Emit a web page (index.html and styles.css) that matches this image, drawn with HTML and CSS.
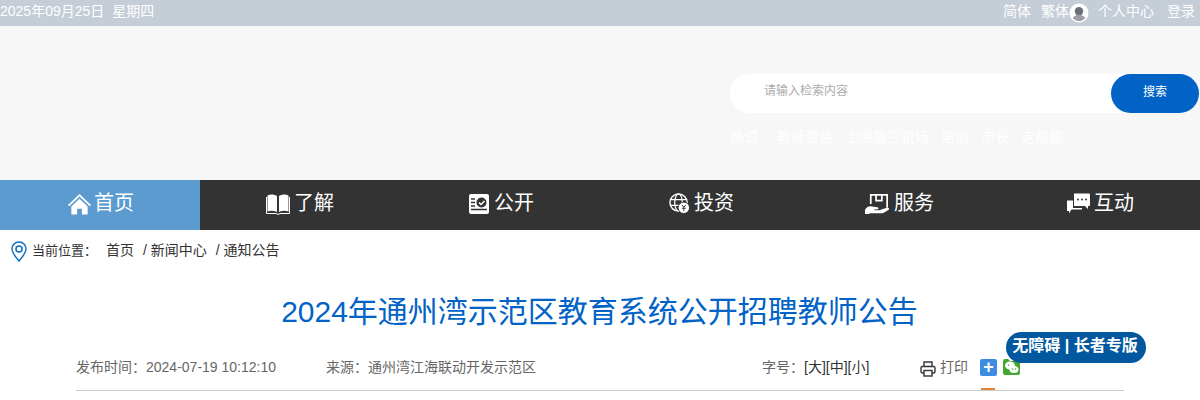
FILE: index.html
```html
<!DOCTYPE html>
<html lang="zh-CN">
<head>
    <meta charset="UTF-8">
    <title>2024年通州湾示范区教育系统公开招聘教师公告</title>
    <link rel="stylesheet" href="styles.css">
</head>
<body>
    <div class="topbar">
        <div class="date"><span>2025年09月25日</span><span>星期四</span></div>
        <div class="toplinks">
            <a class="lang">简体</a>
            <a class="lang-alt">繁体</a>
            <svg class="user-icon" viewBox="0 0 20 20" width="20" height="20">
                <circle cx="10" cy="10" r="9.500" fill="#fff"/>
                <circle cx="10" cy="8.200" r="4.200" fill="#6b6f75"/>
                <path d="M3.800 15c1.500-2.200 3.600-3.200 6.200-3.200s4.700 1 6.200 3.200c-1.500 2-3.800 3.100-6.200 3.100s-4.700-1.100-6.200-3.100z" fill="#9a9ea4"/>
            </svg>
            <a class="center">个人中心</a>
            <a class="login">登录</a>
        </div>
    </div>

    <div class="header">
        <div class="search-area">
            <div class="search">
                <span class="search-text">请输入检索内容</span>
                <button class="search-btn">搜索</button>
            </div>
            <div class="hot">
                <span>热词：</span><span>教师资格</span><span>上海第三机场</span><span>培训</span><span>市长</span><span>走帮服</span>
            </div>
        </div>
    </div>

    <div class="nav">
        <a class="nav-item active">
            <span class="nav-icon"><svg class="icon-home" viewBox="0 0 24 24" width="24" height="24"><path d="M12 1.500L0 13l1.300 1.400L12 4.300l10.700 10.100L24 13z" fill="#fff"/><path d="M12 6.500L3.500 14.500V23h6v-6h5v6h6v-8.500z" fill="#fff"/></svg></span>
            首页
        </a>
        <a class="nav-item">
            <span class="nav-icon"><svg viewBox="0 0 24 22" width="24" height="22"><path d="M1.500 2.500C4.500 1 8 1.200 11 3v16C8 17.500 4.500 17.300 1.500 18.500z" fill="#fff"/><path d="M22.500 2.500C19.500 1 16 1.200 13 3v16c3-1.500 6.500-1.700 9.500-.5z" fill="#fff"/><path d="M.5 4v16.500h9.500c1 1 3 1 4 0h9.500V4" fill="none" stroke="#fff" stroke-width="1"/></svg></span>
            了解
        </a>
        <a class="nav-item">
            <span class="nav-icon"><svg class="icon-doc" viewBox="0 0 20 20" width="20" height="20"><rect width="20" height="20" rx="2" fill="#fff"/><path d="M2 5h4M2 8.500h4M2 12h4M2 15.500h16" stroke="#333" stroke-width="1.500" fill="none"/><circle cx="12.500" cy="8.500" r="5" fill="#333"/><path d="M10 8.500l2 2 3.500-3.500" stroke="#fff" stroke-width="1.500" fill="none"/></svg></span>
            公开
        </a>
        <a class="nav-item">
            <span class="nav-icon"><svg viewBox="0 0 22 22" width="21" height="21"><circle cx="10" cy="10" r="9" fill="none" stroke="#fff" stroke-width="1.500"/><ellipse cx="10" cy="10" rx="4" ry="9" fill="none" stroke="#fff" stroke-width="1.300"/><path d="M1 7h18M1 13h18" stroke="#fff" stroke-width="1.300"/><circle cx="15.500" cy="15.500" r="6" fill="#fff" stroke="#333"/><path d="M13.500 12.500l2 2.500 2-2.500M15.500 15v4M13.500 16h4" stroke="#333" stroke-width="1" fill="none"/></svg></span>
            投资
        </a>
        <a class="nav-item">
            <span class="nav-icon"><svg viewBox="0 0 26 22" width="25" height="22"><path d="M6 11V1.500h17V15" fill="none" stroke="#fff" stroke-width="1.800"/><path d="M11.500 1.500v6h6v-6" fill="none" stroke="#fff" stroke-width="1.800"/><path d="M0 17c2-3 4-4 7-3.500l6 1c1.500.3 1.500 2-.2 2.200H9.500l.2.700h5l8-2.500c2-.5 3 1 2 2l-6 3.600H5.500L3.500 21.500H0z" fill="#fff"/></svg></span>
            服务
        </a>
        <a class="nav-item">
            <span class="nav-icon"><svg viewBox="0 0 23 21" width="23" height="21"><path d="M0 7.500h6V15h9v1.500H4.500L2 20.500V18H0z" fill="#fff"/><path d="M7 .5h15a1 1 0 0 1 1 1V12a1 1 0 0 1-1 1h-1v3l-3-3H7z" fill="#fff"/><circle cx="11" cy="6.500" r="1" fill="#333"/><circle cx="15" cy="6.500" r="1" fill="#333"/><circle cx="19" cy="6.500" r="1" fill="#333"/></svg></span>
            互动
        </a>
    </div>

    <div class="crumbs">
        <svg viewBox="0 0 16 21" width="16" height="21"><path d="M8 1C4 1 1 4 1 8c0 4 3.500 8 7 12 3.500-4 7-8 7-12 0-4-3-7-7-7z" fill="none" stroke="#0e6fbd" stroke-width="1.500"/><circle cx="8" cy="8" r="3" fill="none" stroke="#0e6fbd" stroke-width="1.500"/></svg>
        <span class="crumb-label">当前位置：</span>
        <span class="crumb-home">首页</span>
        <span class="crumb-a">/ 新闻中心</span>
        <span class="crumb-b">/ 通知公告</span>
    </div>

    <h1 class="title">2024年通州湾示范区教育系统公开招聘教师公告</h1>

    <div class="meta">
        <span class="meta-time">发布时间：2024-07-19 10:12:10</span>
        <span class="meta-source">来源：通州湾江海联动开发示范区</span>
        <span class="meta-size">字号：<b>[大][中][小]</b></span>
        <svg class="print-icon" viewBox="0 0 16 16" width="16" height="16"><path d="M4 5V1h8v4M4 12H2.500a1.500 1.500 0 0 1-1.500-1.500V7a1.500 1.500 0 0 1 1.500-1.500h11A1.500 1.500 0 0 1 15 7v3.500a1.500 1.500 0 0 1-1.500 1.500H12" fill="none" stroke="#333" stroke-width="1.400"/><rect x="4" y="9.500" width="8" height="5.500" fill="none" stroke="#333" stroke-width="1.400"/></svg>
        <span class="meta-print">打印</span>
        <span class="share-plus">+</span>
        <svg class="share-wx" viewBox="0 0 17 17" width="17" height="17"><path d="M0 2a2 2 0 0 1 2-2h3l2 2h8a2 2 0 0 1 2 2v10a2 2 0 0 1-2 2H2a2 2 0 0 1-2-2z" fill="#43a82f"/><ellipse cx="7" cy="6.500" rx="5" ry="4" fill="#fff"/><ellipse cx="11" cy="10.500" rx="4.500" ry="3.500" fill="#fff"/><circle cx="5.500" cy="6" r=".8" fill="#43a82f"/><circle cx="9.500" cy="10" r=".8" fill="#43a82f"/><circle cx="12.500" cy="10" r=".8" fill="#43a82f"/></svg>
    </div>
    <div class="tab-mark"></div>

    <a class="care-badge">无障碍 | 长者专版</a>
</body>
</html>
```
FILE: styles.css
```css
* {
    box-sizing: border-box;
}

html, body {
    height: 400px;
    overflow: hidden;
}

body {
    margin: 0;
    position: relative;
    background-color: #fff;
    color: #333;
    font-family: "Liberation Sans", "Noto Sans CJK SC", sans-serif;
    font-size: 14px;
}

.topbar {
    height: 26px;
    background-color: #c5cdd7;
    color: #fff;
    display: flex;
    justify-content: space-between;
    align-items: center;
    padding: 0 5px 4px 0;
    line-height: 20px;
}

.date span:first-child {
    margin-right: 8px;
}

.toplinks {
    display: flex;
    align-items: center;
}

.lang {
    margin-right: 10px;
}

.user-icon {
    margin: 4px 9px 0 0;
}

.center {
    margin-right: 13px;
}

.header {
    height: 154px;
    background-color: #f7f7f7;
    display: flex;
    justify-content: flex-end;
    padding: 48px 1px 0 0;
}

.search-area {
    width: 469px;
}

.search {
    height: 39px;
    background-color: #fff;
    border-radius: 20px;
    display: flex;
    justify-content: space-between;
    padding-left: 34px;
}

.search-text {
    font-size: 12px;
    line-height: 35px;
    color: #aaa;
}

.search-btn {
    width: 88px;
    height: 39px;
    padding: 0 0 6px;
    border: none;
    border-radius: 20px;
    background-color: #0263c7;
    color: #fff;
    font-family: inherit;
    font-size: 12px;
}

.hot {
    margin-top: 14px;
    color: #fff;
    display: flex;
    line-height: 20px;
}

.hot span {
    margin-right: 12px;
}

.hot span:first-child {
    margin-right: 5px;
}

.nav {
    height: 50px;
    background-color: #333;
    display: flex;
}

.nav-item {
    width: 200px;
    color: #fff;
    font-size: 20px;
    display: flex;
    align-items: center;
    gap: 4px;
    padding: 0 0 8px 60px;
}

.nav-item.active {
    background-color: #5b9bcf;
}

.nav-icon {
    width: 30px;
    display: flex;
    justify-content: flex-end;
    margin-top: 5px;
}

.icon-home {
    margin-right: -1px;
    width: 23px;
}

.icon-doc {
    margin-right: 1px;
}

.crumbs {
    height: 40px;
    display: flex;
    align-items: center;
    padding: 0 0 2px 11px;
}

.crumbs svg {
    margin: 5px 5px 0 0;
}

.crumb-label {
    margin-right: 9px;
    font-size: 13px;
}

.crumb-home {
    margin-right: 9px;
}

.crumb-a {
    margin-right: 9px;
}

.title {
    margin: 24px 0 0;
    padding-right: 1px;
    font-size: 30px;
    font-weight: normal;
    line-height: 36px;
    color: #0263c7;
    text-align: center;
}

.meta {
    margin: 0 76px;
    height: 61px;
    padding-top: 27px;
    border-bottom: 1px solid #ccc;
    display: flex;
    align-items: flex-start;
    color: #666;
    line-height: 20px;
}

.meta-time {
    width: 250px;
}

.meta-source {
    width: 436px;
}

.meta-size {
    width: 158px;
}

.meta-size b {
    font-weight: normal;
    color: #333;
}

.print-icon {
    margin: 4px 4px 0 0;
}

.meta-print {
    margin-right: 12px;
}

.share-plus {
    width: 17px;
    height: 17px;
    margin-top: 2px;
    border-radius: 2px;
    background-color: #3d8ce0;
    color: #fff;
    font-size: 18px;
    line-height: 16px;
    text-align: center;
    font-weight: bold;
}

.share-wx {
    margin: 2px 0 0 6px;
}

.tab-mark {
    position: absolute;
    left: 981px;
    top: 388px;
    width: 14px;
    height: 2px;
    background-color: #e0863c;
}

.care-badge {
    position: absolute;
    left: 1006px;
    top: 332px;
    width: 140px;
    height: 31px;
    padding-right: 2px;
    border-radius: 16px;
    background-color: #02589f;
    color: #fff;
    font-size: 16px;
    font-weight: bold;
    line-height: 28px;
    text-align: center;
}
```
